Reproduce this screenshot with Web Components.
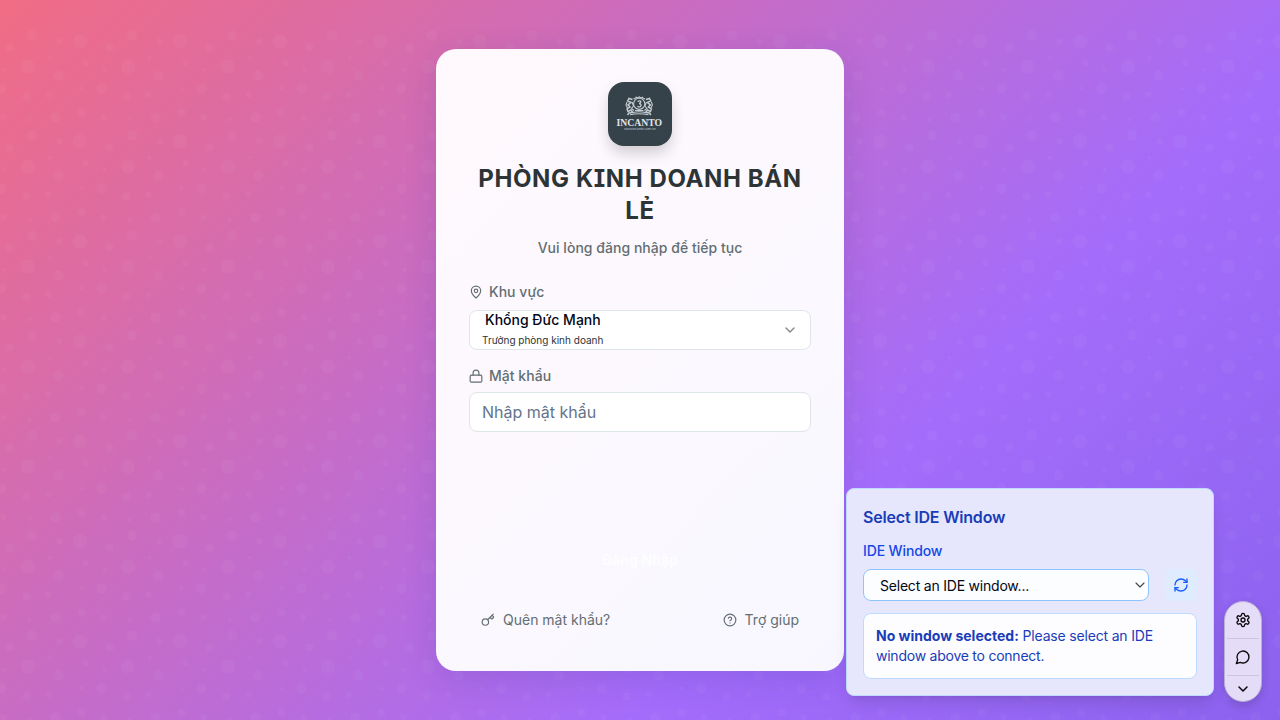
<!DOCTYPE html>
<html lang="vi">
<head>
<meta charset="utf-8">
<title>Đăng nhập</title>
<style>
html,body{margin:0;height:100%;overflow:hidden}
body{font-family:Inter,"Liberation Sans",sans-serif;color:#2d3436}
</style>
</head>
<body>
<app-shell>
  <login-card>
    <brand-logo slot="logo"></brand-logo>
    <form-field label="Khu vực" icon="pin"><user-select></user-select></form-field>
    <form-field label="Mật khẩu" icon="lock"><pass-input></pass-input></form-field>
  </login-card>
  <ide-panel slot="overlay"></ide-panel>
  <tool-bar slot="overlay"></tool-bar>
</app-shell>
<script>
const ICONS={
pin:'<path d="M20 10c0 4.993-5.539 10.193-7.399 11.799a1 1 0 0 1-1.202 0C9.539 20.193 4 14.993 4 10a8 8 0 0 1 16 0"/><circle cx="12" cy="10" r="3"/>',
lock:'<rect width="20" height="12" x="2" y="10.5" rx="2"/><path d="M7 10.5V7a5 5 0 0 1 10 0v3.500"/>',
key:'<path d="m15.500 7.500 2.300 2.300a1 1 0 0 0 1.400 0l2.100-2.100a1 1 0 0 0 0-1.400L19 4"/><path d="m21 2-9.600 9.600"/><circle cx="7.500" cy="15.500" r="5.500"/>',
help:'<circle cx="12" cy="12" r="10"/><path d="M9.090 9a3 3 0 0 1 5.830 1c0 2-3 3-3 3"/><path d="M12 17h.01"/>',
down:'<path d="m6 9 6 6 6-6"/>',
wide:'<path d="m4 8 8 8 8-8"/>',
refresh:'<path d="M3 12a9 9 0 0 1 9-9 9.750 9.750 0 0 1 6.740 2.740L21 8"/><path d="M21 3v5h-5"/><path d="M21 12a9 9 0 0 1-9 9 9.750 9.750 0 0 1-6.740-2.740L3 16"/><path d="M8 16H3v5"/>',
gear:'<path d="M12.220 2h-.44a2 2 0 0 0-2 2v.18a2 2 0 0 1-1 1.730l-.43.25a2 2 0 0 1-2 0l-.15-.08a2 2 0 0 0-2.730.73l-.22.38a2 2 0 0 0 .73 2.730l.15.1a2 2 0 0 1 1 1.720v.51a2 2 0 0 1-1 1.740l-.15.09a2 2 0 0 0-.73 2.730l.22.38a2 2 0 0 0 2.730.73l.15-.08a2 2 0 0 1 2 0l.43.25a2 2 0 0 1 1 1.730V20a2 2 0 0 0 2 2h.44a2 2 0 0 0 2-2v-.18a2 2 0 0 1 1-1.730l.43-.25a2 2 0 0 1 2 0l.15.08a2 2 0 0 0 2.730-.73l.22-.39a2 2 0 0 0-.73-2.730l-.15-.08a2 2 0 0 1-1-1.740v-.5a2 2 0 0 1 1-1.740l.15-.09a2 2 0 0 0 .73-2.730l-.22-.38a2 2 0 0 0-2.730-.73l-.15.08a2 2 0 0 1-2 0l-.43-.25a2 2 0 0 1-1-1.730V4a2 2 0 0 0-2-2z"/><circle cx="12" cy="12" r="3"/>',
chat:'<path d="M7.900 20A9 9 0 1 0 4 16.100L2 22Z"/>'};
const icon=(n,s,w=2)=>`<svg width="${s}" height="${s}" viewBox="0 0 24 24" fill="none" stroke="currentColor" stroke-width="${w}" stroke-linecap="round" stroke-linejoin="round" style="display:block;flex:none">${ICONS[n]}</svg>`;
const define=(name,html)=>customElements.define(name,class extends HTMLElement{
  constructor(){super();this.attachShadow({mode:'open'}).innerHTML=typeof html==='function'?html(this):html}
});
const dots=[[32,35.5,5],[80,41.500,7],[28,66.500,7],[59.500,41.500,3],[9.500,47.500,4],[49.500,57.500,2],[85.500,63,3],[58.500,75.500,5],[1.500,88.500,5],[101.500,88.500,5],[26.500,96.500,4],[26.500,-3.500,4],[48.500,94.500,3],[81.500,88.500,2],[4.500,69.500,2],[3.500,17.500,3],[29.500,19.500,2],[55.500,17.500,5],[81.500,12.500,4]];
define('app-shell',`<style>
:host{display:flex;width:100%;height:100%;align-items:center;justify-content:center;position:relative;overflow:hidden;background:linear-gradient(135deg,#f16c84 0%,#a46cfb 67.500%,#8b62ee 100%)}
.dots{position:absolute;inset:0;clip-path:inset(27px 0 0)}
</style>
<svg class="dots" width="100%" height="100%"><defs><pattern id="bubbles" width="100" height="100" patternUnits="userSpaceOnUse"><g fill="#fff" fill-opacity=".032">${dots.map(d=>`<circle cx="${d[0]}" cy="${d[1]}" r="${d[2]}"/>`).join('')}</g></pattern></defs><rect width="100%" height="100%" fill="url(#bubbles)"/></svg>
<slot></slot><slot name="overlay"></slot>`);
define('brand-logo',`<style>:host{display:block;width:64px;height:64px;border-radius:16px;background:#36424a;box-shadow:0 8px 16px -2px rgba(0,0,0,.2);overflow:hidden}
svg{display:block}</style>
<svg width="64" height="64" viewBox="0 0 64 64" fill="none" stroke="#c3cbd0">
<g stroke-width="1.100"><circle cx="31.200" cy="21.800" r="5.600"/><path d="M29.500 19.500q3.300-1.500 3.300.5 0 1.300-1.800 1.500 2.300.2 2 2-.6 2.300-3.600.8" stroke-width="1.300"/><path d="M25.500 17q5.700-3.500 11.500 0M27.500 15.300l1.200-.4m2-.2h1.200m2 .2 1.200.5"/>
<path d="M22 32.800q9-2 18.500 0M25 30.500q6-1.500 12.500 0M27 28.500h8.500"/>
<g><path d="M24.500 17.500l-3.500-1-1.300 2.500 3.300 1.500-3 2.300 2 2.200-3 2 1 2.500 3-1.500 1.800 2.500-3.800.5-1.500 2" stroke-width="1.500"/><path d="M19 20l-1 3 1.500 3M24 20l1.500 4-2 2.500 2.500 2"/></g>
<g transform="translate(62.400)scale(-1 1)"><path d="M24.500 17.500l-3.500-1-1.300 2.500 3.300 1.500-3 2.300 2 2.200-3 2 1 2.500 3-1.500 1.800 2.500-3.800.5-1.500 2" stroke-width="1.500"/><path d="M19 20l-1 3 1.500 3M24 20l1.500 4-2 2.500 2.500 2"/></g></g>
<text x="8.600" y="43.500" textLength="45.500" lengthAdjust="spacingAndGlyphs" fill="#e0e5e8" stroke="none" font-family="Liberation Serif,serif" font-weight="700" font-size="10">INCANTO</text>
<text x="16" y="48.300" textLength="32" fill="#b5bdc2" stroke="none" font-family="Liberation Sans,sans-serif" font-size="4">www.incanto.com.vn</text></svg>`);
define('login-card',`<style>
:host{box-sizing:border-box;position:relative;display:flex;flex-direction:column;width:408px;height:622px;padding:33px;border-radius:20px;background:linear-gradient(135deg,#fff9fd,#f8f7ff);box-shadow:0 8px 32px rgba(31,38,135,.15)}
header{display:flex;flex-direction:column;align-items:center;text-align:center}
h1{margin:17px 0 0;font-size:24px;line-height:32px;font-weight:700;color:#2d3436;letter-spacing:.6px;font-feature-settings:"cv08"}
p{margin:11px 0 0;font-size:14px;line-height:20px;font-weight:500;color:#636e72;letter-spacing:.03px}
.fields{display:flex;flex-direction:column;margin-top:24px;gap:16px}
.submit{margin-top:107px;height:40px;display:flex;align-items:center;justify-content:center;color:rgba(255,255,255,.85);font-size:14px;font-weight:600;letter-spacing:.15px}
footer{margin-top:23px;padding:0 12px;height:36px;display:flex;align-items:center;justify-content:space-between;font-size:14px;color:#636e72}
footer span{display:flex;align-items:center;gap:8px}
footer em{font-style:normal;padding-bottom:2px}
</style><header><slot name="logo"></slot><h1>PHÒNG KINH DOANH BÁN LẺ</h1><p>Vui lòng đăng nhập để tiếp tục</p></header>
<div class="fields"><slot></slot></div><div class="submit">Đăng Nhập</div>
<footer><span>${icon('key',14)}<em>Quên mật khẩu?</em></span><span>${icon('help',14)}<em>Trợ giúp</em></span></footer>`);
define('form-field',el=>`<style>:host{display:block}
.l{display:flex;align-items:center;gap:6px;height:20px;margin-bottom:8px;color:#636e72;font-size:14px;font-weight:500;letter-spacing:.03px}span{padding-bottom:2px}</style>
<div class="l">${icon(el.getAttribute('icon'),14)}<span>${el.getAttribute('label')}</span></div><slot></slot>`);
define('user-select',`<style>:host{box-sizing:border-box;display:flex;align-items:center;justify-content:space-between;height:40px;padding:0 12px;border:1px solid #dfe6e9;border-radius:8px;background:rgba(255,255,255,.9)}
.n{display:flex;flex-direction:column}b{font-size:14px;line-height:20px;font-weight:500;color:#020617;padding-left:3px}small{font-size:10px;line-height:20px;color:#2d3436}
i{color:#7f8487}</style><div class="n"><b>Khổng Đức Mạnh</b><small>Trưởng phòng kinh doanh</small></div><i>${icon('down',16)}</i>`);
define('pass-input',`<style>:host{box-sizing:border-box;display:flex;align-items:center;height:40px;margin-top:-2px;padding:0 12px;border:1px solid #dfe6e9;border-radius:8px;background:#fff;color:#64748b;font-size:16px}</style><span>Nhập mật khẩu</span>`);
define('ide-panel',`<style>
:host{box-sizing:border-box;position:absolute;left:846px;top:488px;width:368px;height:208px;padding:16px;border:1px solid #bedbff;border-radius:8px;background:#e6e7fd;box-shadow:0 10px 15px -3px rgba(0,0,0,.1),0 4px 6px -4px rgba(0,0,0,.1);color:#193cb8}
h3{margin:0;font-size:16px;line-height:24px;font-weight:600;letter-spacing:-.19px}
label{display:block;margin:12px 0 8px;font-size:14px;line-height:20px;font-weight:500;letter-spacing:-.13px;color:#1447e6}
.row{display:flex;justify-content:space-between}
.sel{box-sizing:border-box;width:286px;height:32px;border:1px solid #8ec5ff;border-radius:8px;background:#fcfdff;color:#030712;display:flex;align-items:center;justify-content:space-between;padding:1px 0 0 16px;font-size:14px;letter-spacing:-.21px}
.sel i{color:#444;margin-right:2px;padding-bottom:1px}
.ref{width:32px;height:32px;border-radius:8px;background:#dfebff;color:#155dfc;display:grid;place-items:center}
.info{box-sizing:border-box;height:66px;margin-top:12px;padding:12px;border:1px solid #bedbff;border-radius:8px;background:#fdfdff;font-size:14px;line-height:20px;letter-spacing:-.18px}
.info b{font-weight:700;letter-spacing:0}
.info div{white-space:nowrap}
</style><h3>Select IDE Window</h3><label>IDE Window</label><div class="row"><div class="sel"><span>Select an IDE window...</span><i>${icon('wide',12,2.200)}</i></div><div class="ref">${icon('refresh',16)}</div></div>
<div class="info"><div><b>No window selected:</b> <span>Please select an IDE</span></div><div style="letter-spacing:-.24px">window above to connect.</div></div>`);
define('tool-bar',`<style>
:host{box-sizing:border-box;position:absolute;left:1224px;top:601px;width:38px;height:101px;padding:0 2px;border:1px solid #b9aed5;border-radius:19px;background:#e5dcf8;color:#09090b;box-shadow:0 4px 10px rgba(0,0,0,.15);display:flex;flex-direction:column}
div{display:grid;place-items:center;height:36px;border-bottom:1px solid #cdc3df}
div:last-child{height:25px;border:0}
</style><div>${icon('gear',16)}</div><div>${icon('chat',16)}</div><div>${icon('down',16,2.300)}</div>`);
</script>
</body>
</html>
